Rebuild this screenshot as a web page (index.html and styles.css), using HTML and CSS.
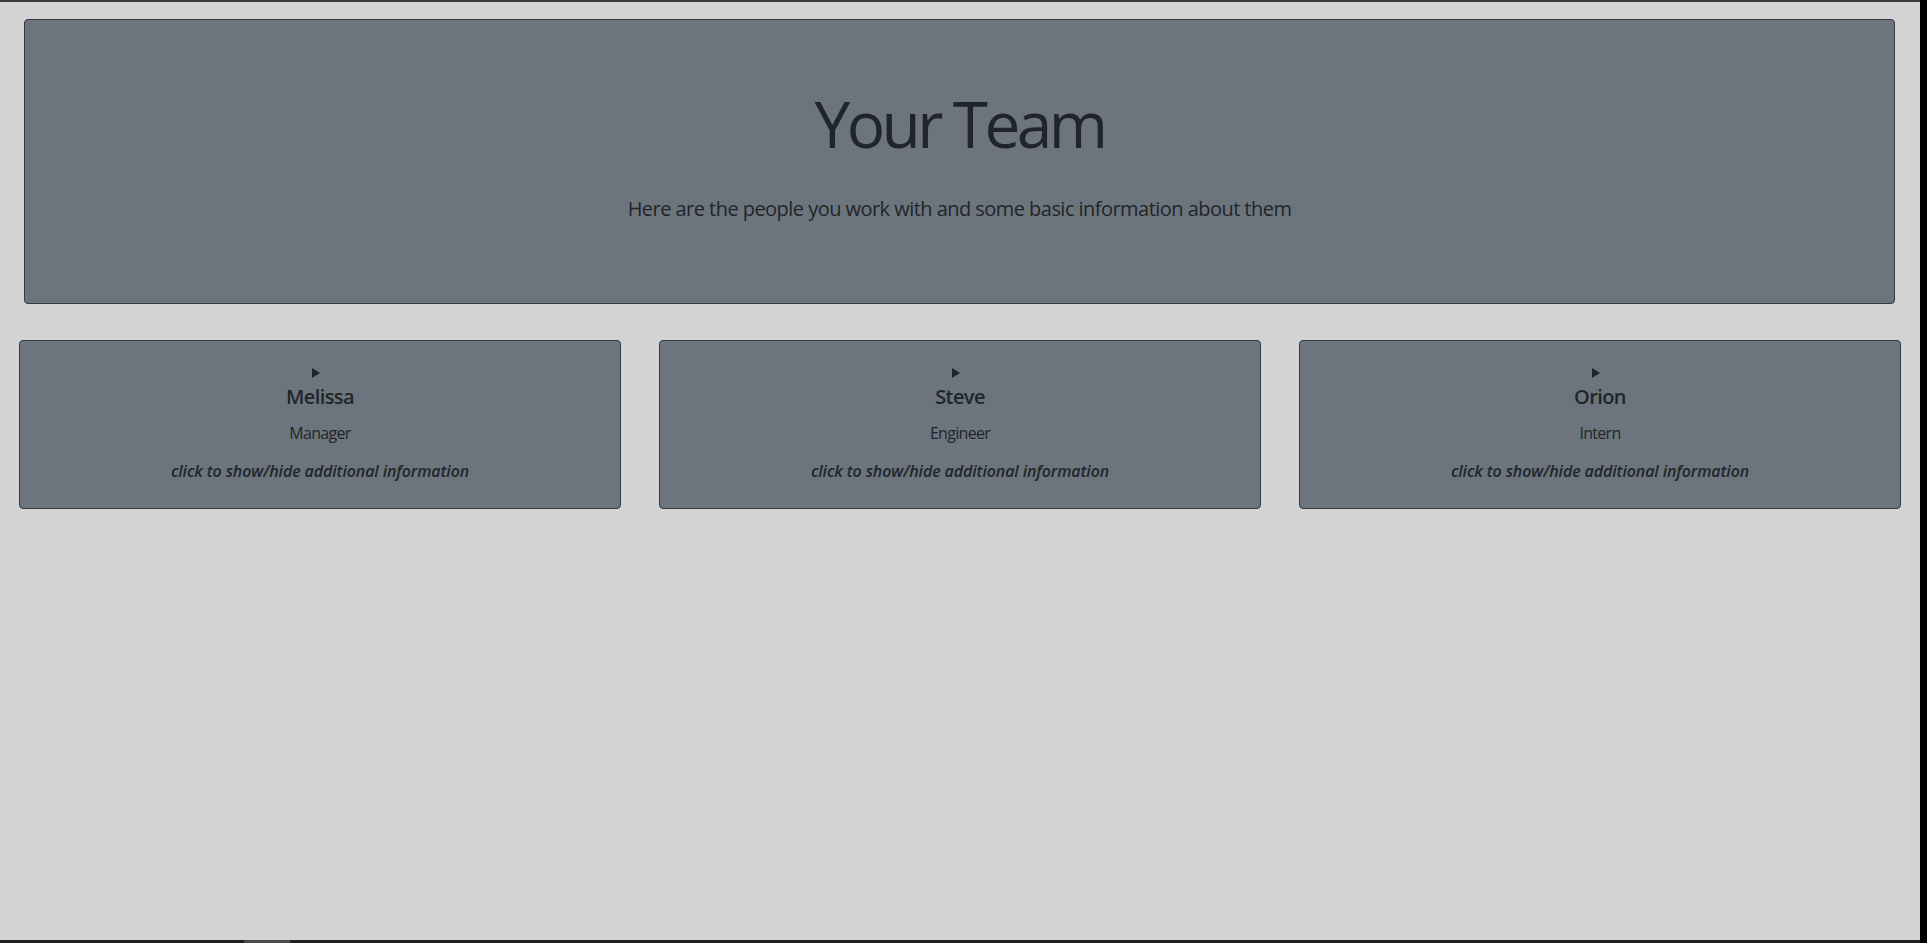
FILE: index.html
```html
<!DOCTYPE html>
<html lang="en">
<head>
<meta charset="utf-8">
<title>Your Team</title>
<link rel="stylesheet" href="styles.css">
</head>
<body>
<div class="screen">
  <div class="topbar"></div>
  <main class="page">
    <header class="jumbotron">
      <h1 class="display-title">Your Team</h1>
      <p class="lead">Here are the people you work with and some basic information about them</p>
    </header>
    <section class="team-row">
      <article class="member-card">
        <div class="marker-line"><svg class="marker" width="8" height="10" viewBox="0 0 8 10"><polygon points="0,0 8,5 0,10" fill="#212529"/></svg></div>
        <h5 class="member-name">Melissa</h5>
        <p class="member-role">Manager</p>
        <p class="member-hint">click to show/hide additional information</p>
      </article>
      <article class="member-card">
        <div class="marker-line"><svg class="marker" width="8" height="10" viewBox="0 0 8 10"><polygon points="0,0 8,5 0,10" fill="#212529"/></svg></div>
        <h5 class="member-name">Steve</h5>
        <p class="member-role">Engineer</p>
        <p class="member-hint">click to show/hide additional information</p>
      </article>
      <article class="member-card">
        <div class="marker-line"><svg class="marker" width="8" height="10" viewBox="0 0 8 10"><polygon points="0,0 8,5 0,10" fill="#212529"/></svg></div>
        <h5 class="member-name">Orion</h5>
        <p class="member-role">Intern</p>
        <p class="member-hint">click to show/hide additional information</p>
      </article>
    </section>
  </main>
  <div class="bottombar"><div class="scroll-thumb"></div></div>
</div>
</body>
</html>
```
FILE: styles.css
```css
html, body {
  margin: 0;
  padding: 0;
  background: #000;
}

.screen {
  width: 1920px;
  display: flex;
  flex-direction: column;
  font-family: "Open Sans", "Noto Sans", sans-serif;
  color: #212529;
}

.topbar {
  height: 2px;
  background: #3a3a3a;
}

.page {
  height: 938px;
  box-sizing: border-box;
  background: #d3d3d3;
  padding-top: 17px;
}

.jumbotron {
  margin: 0 25px 0 24px;
  padding: 66px 32px 63px;
  background: #6c757d;
  border: 1px solid #343a40;
  border-radius: 4px;
  text-align: center;
}

.display-title {
  margin: 0;
  font-size: 64px;
  font-weight: 400;
  line-height: 1.2;
  letter-spacing: -3.6px;
}

.lead {
  margin: 31px 0 16px;
  font-size: 20px;
  font-weight: 400;
  line-height: 30px;
  letter-spacing: -0.54px;
}

.team-row {
  margin-top: 36px;
  padding: 0 19px;
  display: grid;
  grid-template-columns: repeat(3, 1fr);
  gap: 38px;
}

.member-card {
  background: #6c757d;
  border: 1px solid #343a40;
  border-radius: 4px;
  padding: 20px 20px 25px;
  text-align: center;
}

.marker-line {
  height: 24px;
  display: flex;
  justify-content: center;
  align-items: center;
}

.marker {
  margin-right: 8px;
}

.member-name {
  margin: 0;
  font-size: 20px;
  font-weight: 600;
  line-height: 24px;
  letter-spacing: -0.6px;
}

.member-role {
  margin: 12px 0 0;
  font-size: 16px;
  font-weight: 400;
  line-height: 24px;
  letter-spacing: -0.7px;
}

.member-hint {
  margin: 14px 0 0;
  font-size: 16px;
  font-weight: 600;
  font-style: italic;
  line-height: 24px;
  letter-spacing: -0.1px;
}

.bottombar {
  height: 3px;
  background: #1f1f1f;
  display: flex;
}

.scroll-thumb {
  margin-left: 244px;
  width: 46px;
  background: #4a4a4a;
}
```
